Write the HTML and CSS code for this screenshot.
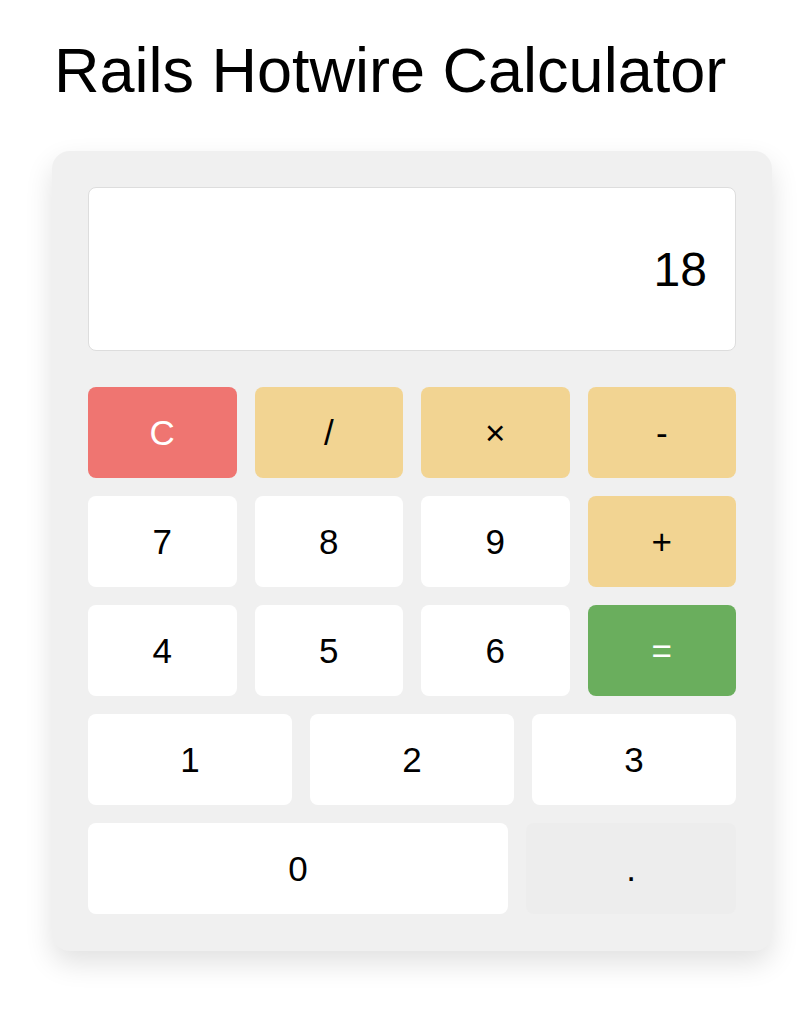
FILE: index.html
```html
<!DOCTYPE html>
<html lang="en">
<head>
<meta charset="utf-8">
<title>Rails Hotwire Calculator</title>
<link rel="stylesheet" href="styles.css">
</head>
<body>
<main class="page">
  <h1 class="title">Rails Hotwire Calculator</h1>
  <div class="calculator">
    <div class="display">18</div>
    <div class="row row-4">
      <button class="key key-clear">C</button>
      <button class="key key-op">/</button>
      <button class="key key-op">×</button>
      <button class="key key-op">-</button>
    </div>
    <div class="row row-4">
      <button class="key">7</button>
      <button class="key">8</button>
      <button class="key">9</button>
      <button class="key key-op">+</button>
    </div>
    <div class="row row-4">
      <button class="key">4</button>
      <button class="key">5</button>
      <button class="key">6</button>
      <button class="key key-equals">=</button>
    </div>
    <div class="row row-3">
      <button class="key">1</button>
      <button class="key">2</button>
      <button class="key">3</button>
    </div>
    <div class="row row-zero">
      <button class="key">0</button>
      <button class="key key-dot">.</button>
    </div>
  </div>
</main>
</body>
</html>
```
FILE: styles.css
```css
* { box-sizing: border-box; }

html, body {
  min-height: 100%;
}

body {
  margin: 0;
  background: #ffffff;
  font-family: "Liberation Sans", Arial, sans-serif;
  color: #000;
}

.page {
  padding: 0 36px 62px 52px;
}

.title {
  margin: 34px 0 45px 2px;
  font-size: 63px;
  font-weight: 400;
  line-height: normal;
}

.calculator {
  width: 720px;
  padding: 36px 36px 37px;
  background: #f0f0f0;
  border-radius: 18px;
  box-shadow: 0 12px 28px rgba(0, 0, 0, 0.12);
  display: flex;
  flex-direction: column;
  gap: 18px;
}

.display {
  height: 164px;
  margin-bottom: 18px;
  background: #ffffff;
  border: 1px solid #dddddd;
  border-radius: 8px;
  display: flex;
  align-items: center;
  justify-content: flex-end;
  padding-right: 28px;
  font-size: 48px;
}

.row {
  display: grid;
  gap: 18px;
}

.row-4 { grid-template-columns: repeat(4, 1fr); }
.row-3 { grid-template-columns: repeat(3, 1fr); }
.row-zero { grid-template-columns: 2fr 1fr; }

.key {
  height: 91px;
  border: none;
  border-radius: 8px;
  background: #ffffff;
  font-family: "Liberation Sans", Arial, sans-serif;
  font-size: 35px;
  color: #000;
  padding: 0;
}

.key-clear { background: #ef7571; color: #ffffff; }
.key-op { background: #f2d492; }
.key-equals { background: #6aae5d; color: #ffffff; }
.key-dot { background: #ededed; }
```
